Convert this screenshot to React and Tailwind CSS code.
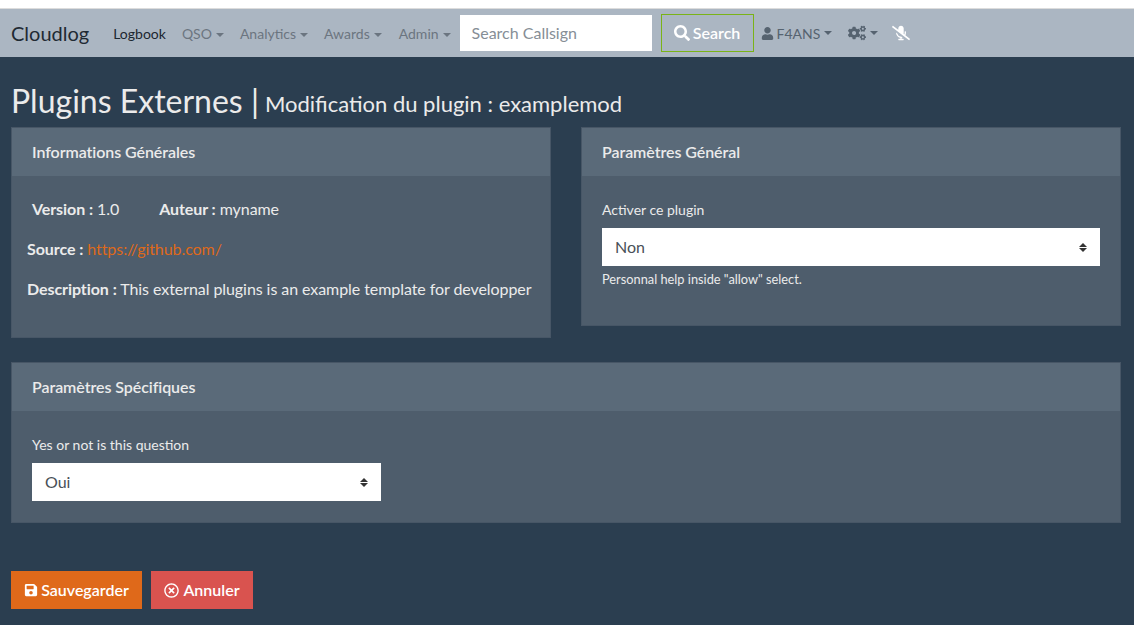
import { FaSearch, FaUser, FaCogs, FaSave, FaRegTimesCircle, FaMicrophoneSlash } from 'react-icons/fa'

function Caret() {
  return <span className="ml-[4px] inline-block align-[2px] border-x-[4px] border-t-[4px] border-x-transparent border-t-current" />
}

function NavItem({ label }) {
  return <span className="px-2 text-[14px] text-[#6b7580] whitespace-nowrap">{label}<Caret /></span>
}

function Card({ title, className, bodyClass, children }) {
  return (
    <div className={`bg-[#4e5d6c] border border-[#475666] ${className}`}>
      <div className="h-[48px] px-5 flex items-center bg-[#5a6a79] text-[16px] font-semibold tracking-[-0.07px] text-[#ebebeb]">{title}</div>
      <div className={bodyClass}>{children}</div>
    </div>
  )
}

function Select({ value, className }) {
  return (
    <div className={`h-[38px] bg-white flex items-center justify-between pl-[13px] pr-[13px] text-[16px] text-[#495057] ${className}`}>
      <span>{value}</span>
      <span className="flex flex-col gap-[1px]">
        <span className="border-x-[4px] border-b-[4px] border-x-transparent border-b-[#333]" />
        <span className="border-x-[4px] border-t-[4px] border-x-transparent border-t-[#333]" />
      </span>
    </div>
  )
}

export default function App() {
  return (
    <div className="h-[625px] bg-[#2b3e50] font-['Lato','Open_Sans',sans-serif] overflow-hidden">
      <div className="h-[9px] bg-white border-b border-[#dcdcdc]" />
      {/* Navbar */}
      <div className="h-[48px] bg-[#abb6c2] flex items-center pl-[11px]">
        <span className="text-[20px] text-[#1f2a33] mr-[16px]">Cloudlog</span>
        <span className="px-2 text-[14px] text-[#1c2730]">Logbook</span>
        <NavItem label="QSO" />
        <NavItem label="Analytics" />
        <NavItem label="Awards" />
        <span className="ml-[1px]"><NavItem label="Admin" /></span>
        <div className="ml-[1px] w-[192px] h-[36px] bg-white flex items-center pl-[12px] text-[16px] text-[#868e96]">Search Callsign</div>
        <div className="ml-[9px] w-[93px] h-[38px] border border-[#7ab317] flex items-center justify-center gap-[3px] text-[16px] font-semibold text-white">
          <FaSearch className="text-[16px]" />Search
        </div>
        <span className="ml-[7px] text-[14px] text-[#566370] flex items-center whitespace-nowrap">
          <FaUser className="text-[13px] mr-[3px]" />F4ANS<Caret />
        </span>
        <span className="ml-[16px] text-[#566370] flex items-center">
          <FaCogs className="text-[18px]" /><Caret />
        </span>
        <FaMicrophoneSlash className="ml-[14px] text-[18px] text-white" />
      </div>

      {/* Content */}
      <div className="pl-[11px] pr-[13px]">
        <h1 className="h-[70px] pt-[24px] text-[#ebebeb] flex items-baseline whitespace-nowrap">
          <span className="text-[32px] leading-[40px]">Plugins Externes |</span>
          <span className="ml-[6px] -translate-y-px text-[22px]">Modification du plugin : examplemod</span>
        </h1>

        <div className="flex justify-between items-start">
          <Card title="Informations Générales" className="w-[540px] h-[211px]" bodyClass="text-[16px] tracking-[-0.07px] text-[#ebebeb] leading-[20px] pt-[23px]">
            <p className="pl-5 flex">
              <span><b>Version :</b> 1.0</span>
              <span className="ml-[40px]"><b>Auteur :</b> myname</span>
            </p>
            <p className="pl-[15px] mt-[20px]"><b>Source :</b> <span className="text-[#df691a]">https://github.com/</span></p>
            <p className="pl-[15px] mt-[20px]"><b>Description :</b> This external plugins is an example template for developper</p>
          </Card>
          <Card title="Paramètres Général" className="w-[540px] h-[199px]" bodyClass="px-5 pt-[24px]">
            <div className="text-[14px] leading-[20px] text-[#ebebeb] mb-[8px]">Activer ce plugin</div>
            <Select value="Non" />
            <div className="mt-[4px] text-[12.8px] leading-[18px] text-[#ebebeb]">Personnal help inside "allow" select.</div>
          </Card>
        </div>

        <Card title="Paramètres Spécifiques" className="mt-[24px] h-[161px]" bodyClass="px-5 pt-[24px]">
          <div className="text-[14px] leading-[20px] text-[#ebebeb] mb-[8px]">Yes or not is this question</div>
          <Select value="Oui" className="w-[349px]" />
        </Card>

        <div className="mt-[48px] flex gap-[9px]">
          <div className="h-[38px] w-[131px] bg-[#df691a] text-white text-[16px] font-semibold flex items-center justify-center gap-[3px]">
            <FaSave className="text-[14px]" />Sauvegarder
          </div>
          <div className="h-[38px] w-[102px] bg-[#d9534f] text-white text-[16px] font-semibold flex items-center justify-center gap-[4px]">
            <FaRegTimesCircle className="text-[15px]" />Annuler
          </div>
        </div>
      </div>
    </div>
  )
}
